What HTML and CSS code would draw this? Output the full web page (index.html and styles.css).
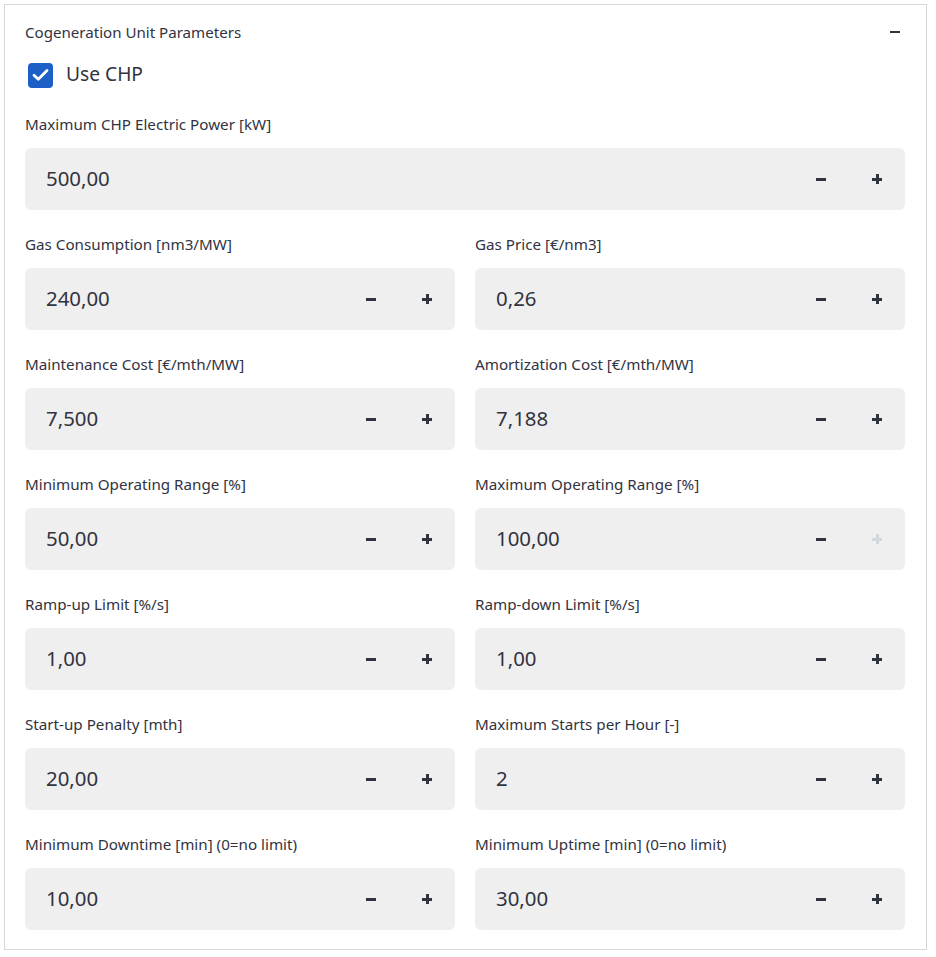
FILE: index.html
```html
<!DOCTYPE html>
<html>
<head>
<meta charset="utf-8">
<link rel="stylesheet" href="styles.css">
</head>
<body>
<div class="expander">
  <div class="exp-header">
    <span class="exp-title">Cogeneration Unit Parameters</span>
    <span class="collapse-icon"></span>
  </div>
  <div class="exp-body">
    <label class="checkbox-row">
      <span class="checkbox">
        <svg width="17" height="14" viewBox="0 0 17 14"><path d="M2 7.2 L6.3 11.3 L15 2.6" fill="none" stroke="#fff" stroke-width="2.8" stroke-linecap="round" stroke-linejoin="round"/></svg>
      </span>
      <span class="checkbox-label">Use CHP</span>
    </label>

    <div class="field">
      <div class="field-label">Maximum CHP Electric Power [kW]</div>
      <div class="num-input"><span class="num-value">500,00</span><span class="step minus"></span><span class="step plus"></span></div>
    </div>

    <div class="grid">
      <div class="field">
        <div class="field-label">Gas Consumption [nm3/MW]</div>
        <div class="num-input"><span class="num-value">240,00</span><span class="step minus"></span><span class="step plus"></span></div>
      </div>
      <div class="field">
        <div class="field-label">Gas Price [€/nm3]</div>
        <div class="num-input"><span class="num-value">0,26</span><span class="step minus"></span><span class="step plus"></span></div>
      </div>
      <div class="field">
        <div class="field-label">Maintenance Cost [€/mth/MW]</div>
        <div class="num-input"><span class="num-value">7,500</span><span class="step minus"></span><span class="step plus"></span></div>
      </div>
      <div class="field">
        <div class="field-label">Amortization Cost [€/mth/MW]</div>
        <div class="num-input"><span class="num-value">7,188</span><span class="step minus"></span><span class="step plus"></span></div>
      </div>
      <div class="field">
        <div class="field-label">Minimum Operating Range [%]</div>
        <div class="num-input"><span class="num-value">50,00</span><span class="step minus"></span><span class="step plus"></span></div>
      </div>
      <div class="field">
        <div class="field-label">Maximum Operating Range [%]</div>
        <div class="num-input"><span class="num-value">100,00</span><span class="step minus"></span><span class="step plus disabled"></span></div>
      </div>
      <div class="field">
        <div class="field-label">Ramp-up Limit [%/s]</div>
        <div class="num-input"><span class="num-value">1,00</span><span class="step minus"></span><span class="step plus"></span></div>
      </div>
      <div class="field">
        <div class="field-label">Ramp-down Limit [%/s]</div>
        <div class="num-input"><span class="num-value">1,00</span><span class="step minus"></span><span class="step plus"></span></div>
      </div>
      <div class="field">
        <div class="field-label">Start-up Penalty [mth]</div>
        <div class="num-input"><span class="num-value">20,00</span><span class="step minus"></span><span class="step plus"></span></div>
      </div>
      <div class="field">
        <div class="field-label">Maximum Starts per Hour [-]</div>
        <div class="num-input"><span class="num-value">2</span><span class="step minus"></span><span class="step plus"></span></div>
      </div>
      <div class="field">
        <div class="field-label">Minimum Downtime [min] (0=no limit)</div>
        <div class="num-input"><span class="num-value">10,00</span><span class="step minus"></span><span class="step plus"></span></div>
      </div>
      <div class="field">
        <div class="field-label">Minimum Uptime [min] (0=no limit)</div>
        <div class="num-input"><span class="num-value">30,00</span><span class="step minus"></span><span class="step plus"></span></div>
      </div>
    </div>
  </div>
</div>
</body>
</html>
```

FILE: styles.css
```css
* { box-sizing: border-box; }
body {
  margin: 0;
  background: #fff;
  font-family: "Noto Sans", "Open Sans", sans-serif;
  color: #31333f;
}
.expander {
  margin: 4px 0 0 4px;
  width: 923px;
  border: 1px solid #d6d6d6;
}
.exp-header {
  height: 54px;
  display: flex;
  align-items: center;
  justify-content: space-between;
  padding: 0 26px 0 20px;
}
.exp-title {
  font-size: 15.1px;
}
.collapse-icon {
  width: 10px;
  height: 2px;
  background: #31333f;
}
.exp-body {
  padding: 0 21px 19px 20px;
}
.checkbox-row {
  display: flex;
  align-items: center;
  height: 32px;
  margin-bottom: 23px;
}
.checkbox {
  width: 25px;
  height: 25px;
  margin-left: 3px;
  border-radius: 4px;
  background: #1c5fc7;
  display: flex;
  align-items: center;
  justify-content: center;
}
.checkbox-label {
  margin-left: 13px;
  font-size: 19.2px;
  line-height: 24px;
  padding-bottom: 2px;
}
.field {
  display: flex;
  flex-direction: column;
}
.field-label {
  height: 22px;
  line-height: 20px;
  font-size: 15.2px;
  margin-bottom: 12px;
}
.num-input {
  height: 62px;
  background: #efefef;
  border-radius: 6px;
  display: flex;
  align-items: center;
}
.num-value {
  flex: 1;
  padding-left: 21px;
  font-size: 20.4px;
  line-height: 26px;
  padding-bottom: 2px;
}
.step {
  width: 56px;
  height: 62px;
  position: relative;
}
.step::before,
.step::after {
  content: "";
  position: absolute;
  left: 23px;
  top: 30px;
  width: 10px;
  height: 2.5px;
  background: #31333f;
}
.minus::after { display: none; }
.plus::after {
  left: 27px;
  top: 26px;
  width: 2.5px;
  height: 10px;
}
.plus.disabled::before,
.plus.disabled::after {
  background: #d3d6de;
}
.field + .grid {
  margin-top: 24px;
}
.grid {
  display: grid;
  grid-template-columns: 1fr 1fr;
  column-gap: 20px;
  row-gap: 24px;
}
```
